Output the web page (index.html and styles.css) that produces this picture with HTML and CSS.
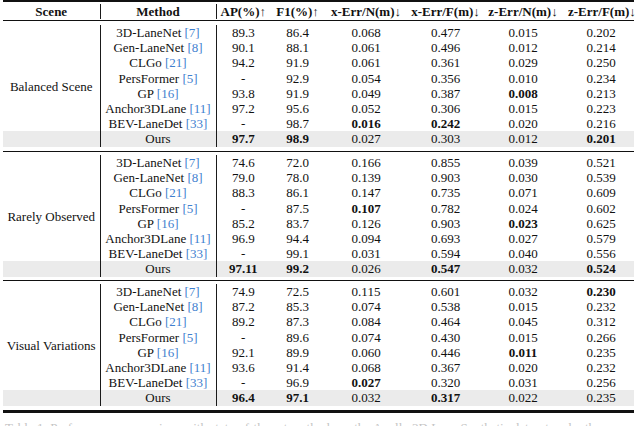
FILE: index.html
```html
<!DOCTYPE html>
<html>
<head>
<meta charset="utf-8">
<link rel="stylesheet" href="styles.css">
</head>
<body>
<div class="page">
<table class="results">
  <colgroup>
    <col class="w1"><col class="w2"><col class="w3"><col class="w4"><col class="w5"><col class="w6"><col class="w7"><col class="w8">
  </colgroup>
  <tbody>
    <tr class="sep"><td colspan="8"><div class="rule top"></div><div class="gap g2"></div></td></tr>
    <tr class="head">
      <th class="vl">Scene</th><th class="vl">Method</th><th>AP(%)↑</th><th>F1(%)↑</th><th>x-Err/N(m)↓</th><th>x-Err/F(m)↓</th><th>z-Err/N(m)↓</th><th class="last">z-Err/F(m)↓</th>
    </tr>
    <tr class="sep"><td colspan="8"><div class="gap g1"></div><div class="rule thin"></div><div class="gap g4"></div></td></tr>

    <tr><td class="vl scene" rowspan="7">Balanced Scene</td><td class="vl">3D-LaneNet <span class="cite">[7]</span></td><td>89.3</td><td>86.4</td><td>0.068</td><td>0.477</td><td>0.015</td><td class="last">0.202</td></tr>
    <tr><td class="vl">Gen-LaneNet <span class="cite">[8]</span></td><td>90.1</td><td>88.1</td><td>0.061</td><td>0.496</td><td>0.012</td><td class="last">0.214</td></tr>
    <tr><td class="vl">CLGo <span class="cite">[21]</span></td><td>94.2</td><td>91.9</td><td>0.061</td><td>0.361</td><td>0.029</td><td class="last">0.250</td></tr>
    <tr><td class="vl">PersFormer <span class="cite">[5]</span></td><td>-</td><td>92.9</td><td>0.054</td><td>0.356</td><td>0.010</td><td class="last">0.234</td></tr>
    <tr><td class="vl">GP <span class="cite">[16]</span></td><td>93.8</td><td>91.9</td><td>0.049</td><td>0.387</td><td><b>0.008</b></td><td class="last">0.213</td></tr>
    <tr><td class="vl">Anchor3DLane <span class="cite">[11]</span></td><td>97.2</td><td>95.6</td><td>0.052</td><td>0.306</td><td>0.015</td><td class="last">0.223</td></tr>
    <tr><td class="vl">BEV-LaneDet <span class="cite">[33]</span></td><td>-</td><td>98.7</td><td><b>0.016</b></td><td><b>0.242</b></td><td>0.020</td><td class="last">0.216</td></tr>
    <tr class="ours"><td class="vl"></td><td class="vl">Ours</td><td><b>97.7</b></td><td><b>98.9</b></td><td>0.027</td><td>0.303</td><td>0.012</td><td class="last"><b>0.201</b></td></tr>

    <tr class="sep"><td colspan="8"><div class="gap g4"></div><div class="rule mid"></div><div class="gap g3"></div></td></tr>

    <tr><td class="vl scene" rowspan="7">Rarely Observed</td><td class="vl">3D-LaneNet <span class="cite">[7]</span></td><td>74.6</td><td>72.0</td><td>0.166</td><td>0.855</td><td>0.039</td><td class="last">0.521</td></tr>
    <tr><td class="vl">Gen-LaneNet <span class="cite">[8]</span></td><td>79.0</td><td>78.0</td><td>0.139</td><td>0.903</td><td>0.030</td><td class="last">0.539</td></tr>
    <tr><td class="vl">CLGo <span class="cite">[21]</span></td><td>88.3</td><td>86.1</td><td>0.147</td><td>0.735</td><td>0.071</td><td class="last">0.609</td></tr>
    <tr><td class="vl">PersFormer <span class="cite">[5]</span></td><td>-</td><td>87.5</td><td><b>0.107</b></td><td>0.782</td><td>0.024</td><td class="last">0.602</td></tr>
    <tr><td class="vl">GP <span class="cite">[16]</span></td><td>85.2</td><td>83.7</td><td>0.126</td><td>0.903</td><td><b>0.023</b></td><td class="last">0.625</td></tr>
    <tr><td class="vl">Anchor3DLane <span class="cite">[11]</span></td><td>96.9</td><td>94.4</td><td>0.094</td><td>0.693</td><td>0.027</td><td class="last">0.579</td></tr>
    <tr><td class="vl">BEV-LaneDet <span class="cite">[33]</span></td><td>-</td><td>99.1</td><td>0.031</td><td>0.594</td><td>0.040</td><td class="last">0.556</td></tr>
    <tr class="ours"><td class="vl"></td><td class="vl">Ours</td><td><b>97.11</b></td><td><b>99.2</b></td><td>0.026</td><td><b>0.547</b></td><td>0.032</td><td class="last"><b>0.524</b></td></tr>

    <tr class="sep"><td colspan="8"><div class="gap g3"></div><div class="rule mid"></div><div class="gap g3"></div></td></tr>

    <tr><td class="vl scene" rowspan="7">Visual Variations</td><td class="vl">3D-LaneNet <span class="cite">[7]</span></td><td>74.9</td><td>72.5</td><td>0.115</td><td>0.601</td><td>0.032</td><td class="last"><b>0.230</b></td></tr>
    <tr><td class="vl">Gen-LaneNet <span class="cite">[8]</span></td><td>87.2</td><td>85.3</td><td>0.074</td><td>0.538</td><td>0.015</td><td class="last">0.232</td></tr>
    <tr><td class="vl">CLGo <span class="cite">[21]</span></td><td>89.2</td><td>87.3</td><td>0.084</td><td>0.464</td><td>0.045</td><td class="last">0.312</td></tr>
    <tr><td class="vl">PersFormer <span class="cite">[5]</span></td><td>-</td><td>89.6</td><td>0.074</td><td>0.430</td><td>0.015</td><td class="last">0.266</td></tr>
    <tr><td class="vl">GP <span class="cite">[16]</span></td><td>92.1</td><td>89.9</td><td>0.060</td><td>0.446</td><td><b>0.011</b></td><td class="last">0.235</td></tr>
    <tr><td class="vl">Anchor3DLane <span class="cite">[11]</span></td><td>93.6</td><td>91.4</td><td>0.068</td><td>0.367</td><td>0.020</td><td class="last">0.232</td></tr>
    <tr><td class="vl">BEV-LaneDet <span class="cite">[33]</span></td><td>-</td><td>96.9</td><td><b>0.027</b></td><td>0.320</td><td>0.031</td><td class="last">0.256</td></tr>
    <tr class="ours"><td class="vl"></td><td class="vl">Ours</td><td><b>96.4</b></td><td><b>97.1</b></td><td>0.032</td><td><b>0.317</b></td><td>0.022</td><td class="last">0.235</td></tr>

    <tr class="sep"><td colspan="8"><div class="gap g45"></div><div class="rule bottom"></div></td></tr>
  </tbody>
</table>
<p class="caption">Table 1: Performance comparison with state-of-the-art methods on the Apollo 3D Lane Synthetic dataset under three scenes.</p>
</div>
</body>
</html>
```

FILE: styles.css
```css
html, body {
  margin: 0;
  padding: 0;
  background: #ffffff;
}

.page {
  width: 640px;
  height: 426px;
  overflow: hidden;
  padding-left: 3px;
  box-sizing: border-box;
  font-family: "Liberation Serif", "Times New Roman", serif;
  font-size: 13px;
  color: #111111;
}

.results {
  width: 631px;
  border-collapse: collapse;
  table-layout: fixed;
}

.w1 { width: 97px; }
.w2 { width: 116px; }
.w3 { width: 54px; }
.w4 { width: 55px; }
.w5 { width: 82px; }
.w6 { width: 77px; }
.w7 { width: 78px; }
.w8 { width: 72px; }

.results td,
.results th {
  padding: 0;
  text-align: center;
  vertical-align: middle;
  white-space: nowrap;
  line-height: 15px;
  height: 15.2px;
}

.results th {
  font-weight: bold;
  height: 15px;
}

.results .vl {
  border-right: 1px solid #1a1a1a;
}

.results .last {
  padding-left: 6px;
}

.results td.scene {
  padding-top: 17px;
}

.results tr.sep td {
  height: auto;
  line-height: 0;
  border: none;
}

.results tr.ours td {
  background: #ebebeb;
}

.cite {
  color: #3f7fcf;
}

.rule {
  background: #111111;
  width: 100%;
}
.rule.top { height: 2px; }
.rule.thin { height: 1px; }
.rule.mid { height: 1.5px; }
.rule.bottom { height: 2.5px; }

.gap.g1 { height: 1px; }
.gap.g2 { height: 2px; }
.gap.g3 { height: 3px; }
.gap.g4 { height: 4px; }
.gap.g45 { height: 4.5px; }

.caption {
  margin: 7px 0 0 2px;
  line-height: 15px;
  color: #c4c4c4;
  white-space: nowrap;
}
```
